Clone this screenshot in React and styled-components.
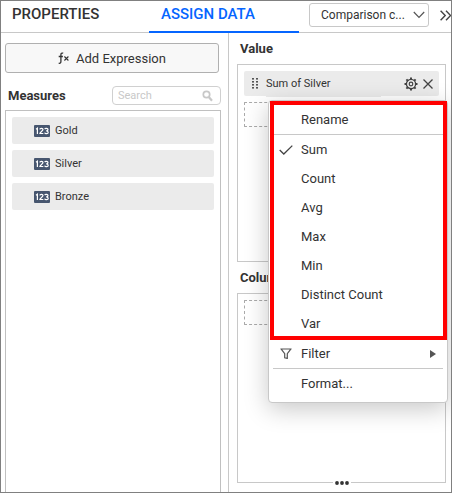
import React from "react";
import styled, { createGlobalStyle, css } from "styled-components";

const GlobalStyle = createGlobalStyle`
  *, *::before, *::after { box-sizing: border-box; }
  body {
    margin: 0;
    background: #fff;
    color: #333;
    font-family: Roboto, "Liberation Sans", sans-serif;
    font-size: 13px;
  }
  button, input, select { font: inherit; color: inherit; }
`;

const Page = styled.div`
  display: flex;
  flex-direction: column;
  height: 100vh;
  min-height: 420px;
  border: 1px solid #808080;
  overflow: hidden;
`;

const Header = styled.header`
  display: flex;
  flex: none;
  height: 32px;
  border-bottom: 1px solid #c8c8c8;
`;

const TabList = styled.div`
  display: flex;
  flex: none;
`;

const Tab = styled.button`
  width: ${(p) => (p.$active ? 150 : 148)}px;
  height: 32px;
  padding: 0 12px 4px;
  border: 0;
  border-bottom: 2px solid transparent;
  background: none;
  font-size: 15px;
  font-weight: 500;
  line-height: 24px;
  text-align: left;
  white-space: nowrap;
  &:first-child { padding-left: 11px; }
  ${(p) =>
    p.$active &&
    css`
      color: #0565ff;
      border-bottom-color: #0565ff;
    `}
`;

const ChartPicker = styled.div`
  position: relative;
  flex: 1;
  height: 24px;
  margin: 2px 10px 0;
`;

const ChartSelect = styled.select`
  width: 100%;
  height: 24px;
  padding: 0 20px 0 11px;
  border: 1px solid #c8c8c8;
  border-radius: 3px;
  background: #fff;
  font-size: 12px;
  appearance: none;
  text-overflow: ellipsis;
`;

const PickerArrow = styled.svg`
  position: absolute;
  right: 4px;
  top: 8px;
  pointer-events: none;
`;

const IconButton = styled.button`
  display: flex;
  align-items: center;
  justify-content: center;
  flex: none;
  padding: 0;
  border: 0;
  background: none;
`;

const MoreTabs = styled(IconButton)`
  width: 12px;
  height: 28px;
  justify-content: flex-end;
`;

const Main = styled.main`
  display: grid;
  grid-template-columns: minmax(0, 228fr) minmax(0, 222fr);
  flex: 1;
  min-height: 0;
`;

const DataPane = styled.section`
  display: flex;
  flex-direction: column;
  padding: 10px 7px 0 4px;
  border-right: 1px solid #c8c8c8;
`;

const ExpressionButton = styled.button`
  display: flex;
  align-items: center;
  justify-content: center;
  gap: 7px;
  flex: none;
  height: 30px;
  margin-right: 2px;
  border: 1px solid #b0b0b0;
  border-radius: 3px;
  background: #f8f8f8;
`;

const MeasuresBar = styled.div`
  display: flex;
  align-items: center;
  justify-content: space-between;
  flex: none;
  height: 19px;
  margin: 13px 0 5px;
  padding-left: 3px;
`;

const Heading = styled.h2`
  margin: 0;
  font-size: 13px;
  font-weight: 700;
  line-height: 16px;
`;

const SearchBox = styled.label`
  display: flex;
  align-items: center;
  width: 109px;
  height: 19px;
  padding: 0 7px 0 5px;
  border: 1px solid #d0d0d0;
  border-radius: 4px;
`;

const SearchInput = styled.input`
  flex: 1;
  min-width: 0;
  padding: 0;
  border: 0;
  outline: 0;
  background: none;
  font-size: 11px;
  line-height: 16px;
  &::placeholder { color: #c8c8c8; opacity: 1; }
`;

const MeasureList = styled.ul`
  display: flex;
  flex-direction: column;
  gap: 6px;
  flex: 1;
  margin: 0;
  padding: 6px;
  list-style: none;
  border: 1px solid #c0c0c0;
  border-bottom: 0;
`;

const Measure = styled.li`
  display: flex;
  align-items: center;
  gap: 5px;
  height: 27px;
  padding-left: 22px;
  border-radius: 2px;
  background: #ebebeb;
  font-size: 11px;
`;

const ShelfPane = styled.section`
  display: flex;
  flex-direction: column;
  padding: 0 5px 9px 8px;
`;

const ShelfTitle = styled(Heading)`
  flex: none;
  padding: 8px 0 7px 3px;
`;

const Shelf = styled.div`
  position: relative;
  flex: ${(p) => p.$grow} 1 0;
  padding: 6px;
  border: 1px solid #c8c8c8;
`;

const Field = styled.div`
  position: relative;
  display: flex;
  align-items: center;
  height: 25px;
  padding: 0 4px 0 8px;
  margin-bottom: 6px;
  border-radius: 2px;
  background: #ebebeb;
  font-size: 11px;
  &::after {
    content: "";
    position: absolute;
    top: 100%;
    left: 22px;
    width: 115px;
    height: 1px;
    background: #ebebeb;
  }
`;

const FieldName = styled.span`
  flex: 1;
  margin-left: 8px;
`;

const FieldAction = styled(IconButton)`
  width: 14px;
  height: 20px;
  margin-left: 3px;
`;

const DropSlot = styled.div`
  height: 25px;
  border: 1px dashed #aaa;
  border-radius: 1px;
`;

const ResizeGrip = styled(IconButton)`
  position: absolute;
  bottom: -7px;
  left: 50%;
  width: 18px;
  height: 12px;
  margin-left: -9px;
  background: #fff;
`;

const Menu = styled.div`
  position: absolute;
  z-index: 2;
  top: 29px;
  right: -9px;
  width: 180px;
  padding: 4px;
  border: 1px solid #c8c8c8;
  border-radius: 4px;
  background: #fff;
  box-shadow: 0 6px 24px rgba(0, 0, 0, 0.22);
  font-size: 13px;
`;

const Highlight = styled.div`
  position: relative;
  &::after {
    content: "";
    position: absolute;
    inset: -4px -4px -2px -3px;
    border: 4px solid #f00;
    pointer-events: none;
  }
`;

const MenuItem = styled.button`
  display: grid;
  grid-template-columns: 28px 1fr 13px;
  align-items: center;
  width: 100%;
  height: 29px;
  padding: 0;
  border: 0;
  background: none;
  text-align: left;
`;

const MenuIcon = styled.span`
  display: flex;
  justify-content: center;
  padding-right: 2px;
`;

const Divider = styled.hr`
  height: 1px;
  margin: 0;
  border: 0;
  background: #c8c8c8;
`;

function NumberIcon() {
  return (
    <svg width="16" height="12" viewBox="0 0 16 12" aria-hidden="true">
      <rect width="16" height="12" rx="1" fill="#47566f" />
      <g fill="none" stroke="#fff" strokeWidth="1.2">
        <path d="M2 4.2 3.4 3.2V9" />
        <path d="M5.8 4.4C5.9 2.9 9 2.9 9 4.6 9 6 6.2 7 5.9 8.5H9.3" />
        <path d="M10.8 4.2C11 3 14 3 14 4.5 14 5.6 13 5.9 12.2 5.9 13 5.9 14.2 6.2 14.2 7.4 14.2 9 11 9 10.7 7.6" />
      </g>
    </svg>
  );
}

function ExpressionIcon() {
  return (
    <svg width="11" height="14" viewBox="0 0 11 14" fill="none" stroke="#333" aria-hidden="true">
      <path d="M5.2 2.2C3.6 1.7 2.9 2.4 2.9 4V10.4C2.9 12 2.1 12.6.7 12.2M.7 5.5H4.9" strokeWidth="1.3" />
      <path d="m6.4 5.5 4 4m0-4-4 4" strokeWidth="1.1" />
    </svg>
  );
}

function SearchIcon() {
  return (
    <svg width="11" height="12" viewBox="0 0 11 12" fill="none" stroke="#c8c8c8" aria-hidden="true">
      <circle cx="4.5" cy="4.5" r="3.2" strokeWidth="1.7" />
      <path d="m6.8 7 3.2 3.8" strokeWidth="2.2" />
    </svg>
  );
}

function GripIcon() {
  const rows = [0, 3, 6, 9];
  return (
    <svg width="6" height="11" viewBox="0 0 6 11" fill="#555" aria-hidden="true">
      {rows.map((y) => (
        <React.Fragment key={y}>
          <rect x="0" y={y} width="2" height="1.6" />
          <rect x="4" y={y} width="2" height="1.6" />
        </React.Fragment>
      ))}
    </svg>
  );
}

function GearIcon() {
  const teeth = [0, 45, 90, 135, 180, 225, 270, 315];
  return (
    <svg width="14" height="14" viewBox="0 0 14 14" fill="none" stroke="#444" aria-hidden="true">
      <circle cx="7" cy="7" r="4.6" strokeWidth="1.3" />
      <circle cx="7" cy="7" r="1.8" strokeWidth="1.2" />
      {teeth.map((a) => (
        <path key={a} d="M7 0.5V2.6" strokeWidth="2" transform={`rotate(${a} 7 7)`} />
      ))}
    </svg>
  );
}

function CloseIcon() {
  return (
    <svg width="10" height="10" viewBox="0 0 10 10" fill="none" stroke="#444" strokeWidth="1.3" aria-hidden="true">
      <path d="m.5.5 9 9m0-9-9 9" />
    </svg>
  );
}

function CheckIcon() {
  return (
    <svg width="14" height="10" viewBox="0 0 14 10" fill="none" stroke="#444" strokeWidth="1.3" aria-hidden="true">
      <path d="m.7 5 4.1 4L13.3.6" />
    </svg>
  );
}

function FilterIcon() {
  return (
    <svg width="12" height="11" viewBox="0 0 12 11" fill="none" stroke="#555" strokeWidth="1.2" aria-hidden="true">
      <path d="M.4 1H11.6M1.4 1.4 4.7 5.6V9.8L7.3 10.4V5.6L10.6 1.4" />
    </svg>
  );
}

const AGGREGATIONS = ["Sum", "Count", "Avg", "Max", "Min", "Distinct Count", "Var"];

function FieldMenu() {
  return (
    <Menu role="menu" aria-label="Field options">
      <Highlight>
        <MenuItem role="menuitem">
          <MenuIcon />
          Rename
        </MenuItem>
        <Divider />
        {AGGREGATIONS.map((name) => (
          <MenuItem key={name} role="menuitemradio" aria-checked={name === "Sum"}>
            <MenuIcon>{name === "Sum" && <CheckIcon />}</MenuIcon>
            {name}
          </MenuItem>
        ))}
      </Highlight>
      <Divider />
      <MenuItem role="menuitem" aria-haspopup="menu">
        <MenuIcon>
          <FilterIcon />
        </MenuIcon>
        Filter
        <svg width="6" height="8" viewBox="0 0 6 8" fill="#555" aria-hidden="true">
          <path d="M0 0 6 4 0 8Z" />
        </svg>
      </MenuItem>
      <Divider />
      <MenuItem role="menuitem">
        <MenuIcon />
        Format...
      </MenuItem>
    </Menu>
  );
}

export default function App() {
  return (
    <>
      <GlobalStyle />
      <Page>
        <Header>
          <TabList role="tablist">
            <Tab role="tab" aria-selected="false">PROPERTIES</Tab>
            <Tab role="tab" aria-selected="true" $active>ASSIGN DATA</Tab>
          </TabList>
          <ChartPicker>
            <ChartSelect aria-label="Chart type">
              <option>Comparison c...</option>
            </ChartSelect>
            <PickerArrow width="12" height="8" viewBox="0 0 12 8" fill="none" stroke="#555" strokeWidth="1.2" aria-hidden="true">
              <path d="m.8 1 5.2 5.4L11.2 1" />
            </PickerArrow>
          </ChartPicker>
          <MoreTabs aria-label="More">
            <svg width="11" height="11" viewBox="0 0 11 11" fill="none" stroke="#444" strokeWidth="1.4" aria-hidden="true">
              <path d="m.6.8 4.6 4.7L.6 10.2M6 .8l4.6 4.7L6 10.2" />
            </svg>
          </MoreTabs>
        </Header>
        <Main>
          <DataPane>
            <ExpressionButton>
              <ExpressionIcon />
              Add Expression
            </ExpressionButton>
            <MeasuresBar>
              <Heading>Measures</Heading>
              <SearchBox>
                <SearchInput type="text" placeholder="Search" aria-label="Search measures" />
                <SearchIcon />
              </SearchBox>
            </MeasuresBar>
            <MeasureList>
              {["Gold", "Silver", "Bronze"].map((name) => (
                <Measure key={name}>
                  <NumberIcon />
                  {name}
                </Measure>
              ))}
            </MeasureList>
          </DataPane>
          <ShelfPane>
            <ShelfTitle>Value</ShelfTitle>
            <Shelf $grow={198}>
              <Field>
                <GripIcon />
                <FieldName>Sum of Silver</FieldName>
                <FieldAction aria-label="Field options" aria-expanded="true">
                  <GearIcon />
                </FieldAction>
                <FieldAction aria-label="Remove field">
                  <CloseIcon />
                </FieldAction>
                <FieldMenu />
              </Field>
              <DropSlot />
            </Shelf>
            <ShelfTitle>Column</ShelfTitle>
            <Shelf $grow={190}>
              <DropSlot />
              <ResizeGrip aria-label="Resize panel">
                <svg width="14" height="4" viewBox="0 0 14 4" fill="#333" aria-hidden="true">
                  <circle cx="2" cy="2" r="1.9" />
                  <circle cx="7" cy="2" r="1.9" />
                  <circle cx="12" cy="2" r="1.9" />
                </svg>
              </ResizeGrip>
            </Shelf>
          </ShelfPane>
        </Main>
      </Page>
    </>
  );
}
